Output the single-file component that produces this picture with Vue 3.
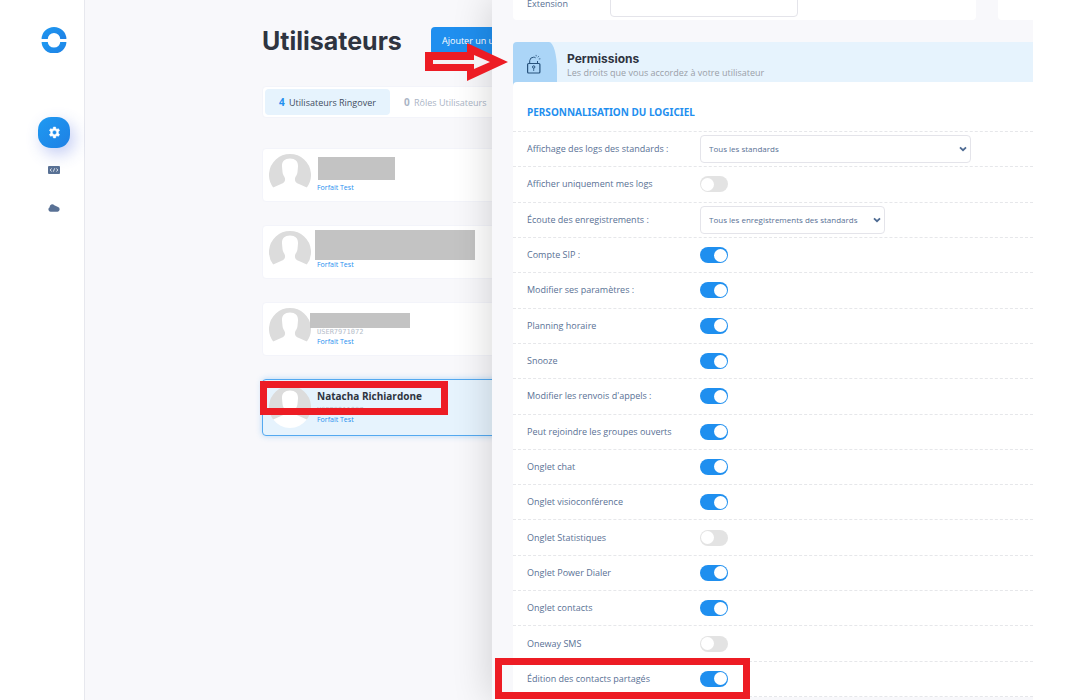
<script setup>
import { ref } from 'vue'

const users = ref([
  { id: 1, name: '', code: '', plan: 'Forfait Test', mask: 'mask-short' },
  { id: 2, name: '', code: '', plan: 'Forfait Test', mask: 'mask-large' },
  { id: 3, name: '', code: 'USER7971072', plan: 'Forfait Test', mask: 'mask-thin' },
  { id: 4, name: 'Natacha Richiardone', code: 'USER8911087', plan: 'Forfait Test', selected: true },
])

const permissions = ref([
  { id: 'logs', label: 'Affichage des logs des standards :', options: ['Tous les standards'], wide: true },
  { id: 'own-logs', label: 'Afficher uniquement mes logs', on: false },
  { id: 'records', label: 'Écoute des enregistrements :', options: ['Tous les enregistrements des standards'] },
  { id: 'sip', label: 'Compte SIP :', on: true },
  { id: 'settings', label: 'Modifier ses paramètres :', on: true },
  { id: 'planning', label: 'Planning horaire', on: true },
  { id: 'snooze', label: 'Snooze', on: true },
  { id: 'forward', label: "Modifier les renvois d'appels :", on: true },
  { id: 'groups', label: 'Peut rejoindre les groupes ouverts', on: true },
  { id: 'chat', label: 'Onglet chat', on: true },
  { id: 'visio', label: 'Onglet visioconférence', on: true },
  { id: 'stats', label: 'Onglet Statistiques', on: false },
  { id: 'dialer', label: 'Onglet Power Dialer', on: true },
  { id: 'contacts', label: 'Onglet contacts', on: true },
  { id: 'oneway', label: 'Oneway SMS', on: false },
  { id: 'shared', label: 'Édition des contacts partagés', on: true, marked: true },
])
</script>

<template>
  <div class="app">
    <nav class="sidebar" aria-label="Navigation">
      <a class="logo" href="#" aria-label="Accueil">
        <svg viewBox="0 0 26 26" width="26" height="26">
          <defs>
            <linearGradient id="logo-fill" x1="0" y1="0" x2="1" y2="1">
              <stop offset="0" stop-color="#1e9af2" />
              <stop offset="1" stop-color="#1f80e4" />
            </linearGradient>
          </defs>
          <path fill="url(#logo-fill)" d="M.6 12A12.400 12 0 0 1 25.400 12H19.200A6.200 6 0 0 0 6.800 12Z" />
          <path fill="url(#logo-fill)" d="M.6 15A12.400 11.500 0 0 0 25.400 15H19.200A6.200 5.500 0 0 1 6.800 15Z" />
        </svg>
      </a>
      <a class="nav-item active" href="#" aria-label="Paramètres">
        <svg viewBox="0 0 24 24" width="13" height="13">
          <path fill="#fff" fill-rule="evenodd" d="M10 2h4l.6 3 1.8 1 2.9-1 2 3.5-2.3 2v3l2.3 2-2 3.5-2.9-1-1.8 1-.6 3h-4l-.6-3-1.8-1-2.9 1-2-3.500 2.300-2v-3l-2.300-2 2-3.500 2.900 1 1.800-1zM12 8a4 4 0 1 0 0 8 4 4 0 0 0 0-8z" stroke="#fff" stroke-width="1" stroke-linejoin="round" />
        </svg>
      </a>
      <a class="nav-item" href="#" aria-label="Développeur">
        <svg viewBox="0 0 12 8" width="12" height="8">
          <rect width="12" height="8" rx="1" fill="#597195" />
          <path d="M3.500 2.500 2.200 4l1.300 1.500M8.500 2.500 9.800 4 8.500 5.500M6.700 2.300 5.300 5.700" fill="none" stroke="#fff" stroke-width=".8" />
        </svg>
      </a>
      <a class="nav-item" href="#" aria-label="Cloud">
        <svg viewBox="0 0 12 8" width="12" height="8">
          <path fill="#597195" d="M2.600 7.800A2.400 2.400 0 0 1 1.700 3.300 2.600 2.600 0 0 1 6.300 1.300L10 3A2.500 2.500 0 0 1 9.600 7.800Z" />
        </svg>
      </a>
    </nav>

    <main class="main">
      <header class="title-row">
        <h1>Utilisateurs</h1>
        <button class="add" type="button">Ajouter un utilisateur</button>
      </header>
      <div class="tabs">
        <button class="tab current" type="button"><b>4</b> Utilisateurs Ringover</button>
        <button class="tab" type="button"><b>0</b> Rôles Utilisateurs</button>
      </div>
      <ul class="users">
        <li v-for="u in users" :key="u.id" class="user" :class="{ selected: u.selected }">
          <svg class="avatar" viewBox="0 0 42 42" width="42" height="42" aria-hidden="true">
            <path fill="#dcdcdc" d="M4.200 33.600A21 21 0 1 1 37.800 33.600Z" />
            <path fill="#fff" d="M21 4.500C26.500 4.500 29.200 7.500 29 12.500L28.500 18C28 21.500 26.500 22 26 24.500C25.600 27.500 27 29 30 30L37.800 33.600A21 21 0 0 1 4.200 33.600L12 30C15 29 16.400 27.500 16 24.500C15.500 22 14 21.500 13.500 18L13 12.500C12.800 7.500 15.500 4.500 21 4.500Z" />
          </svg>
          <div class="info">
            <span class="name">{{ u.name }}</span>
            <span class="code">{{ u.code }}</span>
            <span class="plan">{{ u.plan }}</span>
          </div>
          <span v-if="u.mask" class="mask" :class="u.mask"></span>
          <span v-if="u.selected" class="frame frame-user"></span>
        </li>
      </ul>
    </main>

    <section class="panel">
      <div class="top-cards">
        <div class="card extension">
          <label for="extension">Extension</label>
          <input id="extension" type="text" />
        </div>
        <div class="card"></div>
      </div>
      <div class="permissions">
        <header class="band">
          <span class="band-icon">
            <svg viewBox="0 0 14 20" width="14" height="20" fill="none" stroke="#27527c">
              <rect x=".6" y="9.500" width="12.300" height="9.500" rx="1" stroke-width="1.200" />
              <path d="M2.700 9V6.700A3.900 3.900 0 0 1 6.500 3.200Q8 3.200 8.600 3.800M10.500 7V9" />
              <circle cx="6.700" cy="13" r="1.200" />
              <path d="M6.700 14.200V17M9.300 2.300 9 .9M10.800 3.300 11.800 2.200M11.800 5 13.400 4.800" stroke-width=".8" />
            </svg>
          </span>
          <div>
            <h2>Permissions</h2>
            <p>Les droits que vous accordez à votre utilisateur</p>
          </div>
          <svg class="arrow" viewBox="0 0 83 38" width="83" height="38" aria-hidden="true">
            <path fill="#ed1c24" d="M0 9H42V0L83 19 42 38V28H0Z" />
            <path fill="#f4f2f4" d="M8 17H49V12L65 19 49 26V21H8Z" />
          </svg>
        </header>
        <div class="sheet">
          <h3>PERSONNALISATION DU LOGICIEL</h3>
          <div class="rows">
            <div v-for="p in permissions" :key="p.id" class="row">
              <label :for="p.id">{{ p.label }}</label>
              <span v-if="p.options" class="select" :class="{ wide: p.wide }">
                <select :id="p.id">
                  <option v-for="o in p.options" :key="o">{{ o }}</option>
                </select>
                <svg viewBox="0 0 8 6" width="8" height="6" aria-hidden="true">
                  <path d="M1 1.300 4 4.200 7 1.300" fill="none" stroke="#4d6a92" stroke-width="1.800" />
                </svg>
              </span>
              <input v-else :id="p.id" v-model="p.on" class="switch" type="checkbox" role="switch" />
              <span v-if="p.marked" class="frame frame-row"></span>
            </div>
          </div>
        </div>
      </div>
    </section>
  </div>
</template>

<style>
body {
  margin: 0;
  background: #fff;
}
</style>

<style scoped>
* {
  box-sizing: border-box;
}

.app {
  display: grid;
  grid-template-columns: 85px minmax(0, 407fr) minmax(0, 541fr);
  min-height: 100vh;
  padding-right: 43px;
  font: 9px/14px "Open Sans", "Noto Sans", sans-serif;
  color: #597195;
}

h1, h2, h3, p, ul {
  margin: 0;
  padding: 0;
}

button, input, select {
  font: inherit;
  color: inherit;
}

.sidebar {
  display: flex;
  flex-direction: column;
  align-items: center;
  padding: 27px 0 0 24px;
  border-right: 1px solid #e7e8ee;
}

.logo {
  display: flex;
  margin-bottom: 64px;
}

.nav-item {
  display: flex;
  align-items: center;
  justify-content: center;
  width: 32px;
  height: 38px;
}

.nav-item.active {
  height: 31px;
  margin-bottom: 3px;
  border-radius: 13px;
  background: linear-gradient(135deg, #1e9af2, #1f80e4);
  box-shadow: 4px 6px 16px rgba(60, 90, 220, 0.3);
}

.main {
  padding: 24px 0 0 177px;
  overflow: hidden;
  background: #f8f8fb;
}

.title-row {
  display: flex;
  align-items: center;
  justify-content: space-between;
  height: 34px;
  margin-right: -60px;
}

h1 {
  font: bold 25px/34px Inter, sans-serif;
  color: #2e3440;
}

.add {
  flex: none;
  width: 121px;
  height: 28px;
  padding: 0 0 0 11px;
  border: 0;
  border-radius: 4px;
  background: #1f8fef;
  color: #fff;
  text-align: left;
}

.tabs {
  display: flex;
  height: 32px;
  margin: 28px -60px 0 0;
  padding: 2px;
  border: 1px solid #f3f4fa;
  border-radius: 4px;
  background: #fff;
}

.tab {
  padding: 1px 14px 0;
  border: 0;
  border-radius: 4px;
  background: none;
  color: #aab4c5;
  white-space: nowrap;
}

.tab.current {
  background: #e6f3fd;
  color: #3f4c60;
}

.tab b {
  margin-right: 2px;
  font-size: 10px;
}

.tab.current b {
  color: #1f8fef;
}

.users {
  display: grid;
  gap: 23px;
  margin: 30px -60px 0 0;
  list-style: none;
}

.user {
  position: relative;
  display: flex;
  gap: 6px;
  height: 54px;
  padding: 5px 6px;
  border: 1px solid #f3f4fa;
  border-radius: 4px;
  background: #fff;
}

.user.selected {
  height: 57px;
  padding: 6px;
  border: 1px solid #54a9f0;
  background: #e6f3fd;
  box-shadow: 0 0 6px rgba(31, 143, 239, 0.3);
}

.avatar {
  flex: none;
}

.info {
  display: grid;
  grid-template-rows: 20px 8px 12px;
  align-content: start;
  align-items: center;
}

.name {
  font-size: 10px;
  font-weight: 700;
  color: #2e3440;
}

.code {
  font: 7px/8px "DejaVu Sans Mono", monospace;
  color: #b5bdc9;
}

.plan {
  font-size: 7px;
  color: #1f8fef;
}

.mask {
  position: absolute;
  background: #c3c3c3;
}

.mask-short {
  inset: 8px auto auto 55px;
  width: 77px;
  height: 23px;
}

.mask-large {
  inset: 4px auto auto 52px;
  width: 160px;
  height: 30px;
}

.mask-thin {
  inset: 10px auto auto 47px;
  width: 100px;
  height: 15px;
}

.frame {
  position: absolute;
  border: 7px solid #ed1c24;
  pointer-events: none;
}

.frame-user {
  inset: 1px auto auto -3px;
  width: 188px;
  height: 34px;
}

.panel {
  position: relative;
  display: flex;
  flex-direction: column;
  padding: 0 0 3px 21px;
  background: #f8f8fb;
  box-shadow: -2px 0 36px rgba(0, 0, 0, 0.16);
  clip-path: inset(0 0 0 -80px);
}

.top-cards {
  display: grid;
  grid-template-rows: 20px;
  grid-template-columns: 463fr 35fr;
  gap: 22px;
  margin-bottom: 22px;
}

.card {
  border-radius: 0 0 4px 4px;
  background: #fff;
}

.card:last-child {
  border-bottom-right-radius: 0;
}

.extension {
  display: flex;
  align-items: flex-end;
  padding: 0 14px 3px;
}

.extension label {
  width: 83px;
  padding-bottom: 6px;
}

.extension input {
  width: 188px;
  height: 28px;
  border: 1px solid #e4e4ea;
  border-radius: 4px;
  background: #fff;
}

.permissions {
  display: flex;
  flex: 1;
  flex-direction: column;
  border-radius: 4px 0 0 0;
  background: linear-gradient(#e6f3fd 60px, #f8f8fb 60px);
}

.band {
  position: relative;
  display: flex;
  gap: 10px;
  height: 40px;
}

.band-icon {
  display: flex;
  align-items: center;
  justify-content: center;
  width: 44px;
  height: 44px;
  padding: 0 3px 0 0;
  border-radius: 4px 8px 0 0 / 4px 28px 0 0;
  background: #abd5f7;
}

h2 {
  padding-top: 9px;
  font: bold 12px/15px Inter, sans-serif;
  color: #2e3440;
}

.band p {
  color: #9aa0a8;
}

.arrow {
  position: absolute;
  top: 1px;
  left: -88px;
}

.sheet {
  position: relative;
  display: flex;
  flex: 1;
  flex-direction: column;
  border-radius: 4px 0 0 0;
  background: #fff;
}

h3 {
  padding: 23px 14px 11px;
  font: bold 10px/15px "Noto Sans", "Open Sans", sans-serif;
  color: #1f8fef;
}

.rows {
  display: grid;
  flex: 1;
  grid-auto-rows: minmax(34px, 1fr);
  border-bottom: 1px dashed #e6e7ea;
}

.row {
  position: relative;
  display: grid;
  grid-template-columns: 173px 1fr;
  align-items: center;
  padding: 0 14px;
  border-top: 1px dashed #e6e7ea;
}

.select {
  position: relative;
  display: flex;
  align-items: center;
  width: 185px;
  height: 28px;
}

.select.wide {
  width: 271px;
}

.select select {
  width: 100%;
  height: 100%;
  padding: 0 8px;
  border: 1px solid #e4e4ea;
  border-radius: 4px;
  background: #fff;
  font-size: 8px;
  appearance: none;
}

.select svg {
  position: absolute;
  right: 4px;
}

.switch {
  display: flex;
  align-items: center;
  width: 28px;
  height: 16px;
  margin: 0;
  padding: 0 1px;
  border-radius: 8px;
  background: #e3e3e3;
  appearance: none;
}

.switch::before {
  width: 13px;
  height: 13px;
  border-radius: 50%;
  background: #fff;
  content: "";
}

.switch:checked {
  justify-content: flex-end;
  background: #1f8fef;
}

.frame-row {
  inset: -4px auto auto -18px;
  width: 255px;
  height: 41px;
}
</style>
